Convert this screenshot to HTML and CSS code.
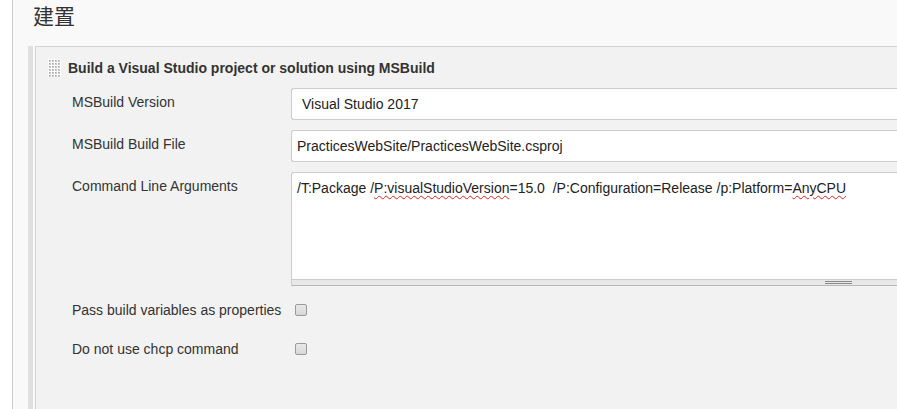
FILE: index.html
```html
<!DOCTYPE html>
<html lang="zh-Hant">
<head>
<meta charset="utf-8">
<title>建置</title>
<link rel="stylesheet" href="styles.css">
</head>
<body>
<div class="page">
  <h1 class="page-title">建置</h1>
  <div class="section">
    <div class="panel">
      <div class="panel-head">
        <svg class="grip" width="13" height="18" viewBox="0 0 13 18" aria-hidden="true">
          <defs>
            <pattern id="dots" x="1" y="1" width="3" height="3" patternUnits="userSpaceOnUse">
              <rect x="0" y="0" width="2" height="2" fill="#c8c8c8"/>
              <rect x="0" y="0" width="1" height="1" fill="#a8a8a8"/>
            </pattern>
          </defs>
          <rect width="13" height="18" fill="#fbfbfb"/>
          <rect x="1" y="1" width="12" height="17" fill="url(#dots)"/>
        </svg>
        <span class="panel-title">Build a Visual Studio project or solution using MSBuild</span>
      </div>
      <div class="form">
        <label class="field-label">MSBuild Version</label>
        <div class="field"><div class="select">Visual Studio 2017</div></div>

        <label class="field-label">MSBuild Build File</label>
        <div class="field"><div class="input">PracticesWebSite/PracticesWebSite.csproj</div></div>

        <label class="field-label">Command Line Arguments</label>
        <div class="field">
          <div class="textarea">/T:Package /<span class="spell">P:visualStudioVersion</span>=15.0&nbsp; /P:Configuration=Release /p:Platform=<span class="spell">AnyCPU</span></div>
          <div class="resizer"><span class="resizer-grip"></span></div>
        </div>

        <label class="field-label check-label">Pass build variables as properties</label>
        <div class="field check-field"><input type="checkbox" class="check"></div>

        <label class="field-label check-label">Do not use chcp command</label>
        <div class="field check-field"><input type="checkbox" class="check"></div>
      </div>
    </div>
  </div>
</div>
</body>
</html>
```

FILE: styles.css
```css
html, body {
  margin: 0;
  padding: 0;
  background: #ffffff;
  overflow: hidden;
  height: 409px;
}

body {
  font-family: "Liberation Sans", Arial, sans-serif;
  font-size: 14px;
  color: #333333;
}

.page {
  margin-left: 12px;
  border-left: 1px solid #cccccc;
  background: #f9f9f9;
  height: 409px;
  padding-left: 15px;
  width: 920px;
}

.page-title {
  margin: 0;
  height: 46px;
  padding-left: 5px;
  font-family: "Noto Sans CJK TC", "Noto Sans CJK SC", sans-serif;
  font-weight: normal;
  font-size: 21px;
  line-height: 30px;
  color: #333333;
}

.section {
  display: flex;
  border-left: 5px solid #e0e0e0;
  padding-left: 2px;
  height: 363px;
}

.panel {
  flex: 1;
  background: #f2f2f2;
  border-left: 1px solid #d4d4d4;
  border-top: 1px solid #d4d4d4;
  padding: 11px 0 0 12px;
}

.panel-head {
  display: flex;
  align-items: center;
  gap: 7px;
  height: 20px;
}

.grip {
  display: block;
  flex: none;
}

.panel-title {
  font-weight: bold;
  font-size: 14px;
  color: #333333;
  line-height: 20px;
}

.form {
  display: grid;
  grid-template-columns: 219px 1fr;
  row-gap: 10px;
  margin-top: 10px;
  margin-left: 24px;
}

.field-label {
  padding-top: 4px;
  line-height: 20px;
  color: #333333;
}

.select,
.input {
  box-sizing: border-box;
  height: 32px;
  background: #ffffff;
  border: 1px solid #cccccc;
  border-radius: 3px 0 0 3px;
  border-right: none;
  line-height: 30px;
  color: #222222;
  white-space: nowrap;
}

.select {
  padding-left: 10px;
}

.input {
  padding-left: 5px;
}

.textarea {
  box-sizing: border-box;
  height: 108px;
  background: #ffffff;
  border: 1px solid #cccccc;
  border-right: none;
  border-radius: 3px 0 0 0;
  padding: 5px 5px;
  line-height: 20px;
  color: #222222;
  white-space: nowrap;
}

.spell {
  text-decoration: underline wavy #e02020;
  text-decoration-thickness: 1px;
  text-underline-offset: 2px;
}

.resizer {
  box-sizing: border-box;
  height: 6px;
  background: #e8e8e8;
  border-left: 1px solid #cccccc;
  border-bottom: 1px solid #b8b8b8;
  display: flex;
  padding-left: 533px;
  padding-top: 1px;
}

.resizer-grip {
  width: 27px;
  height: 3px;
  border-top: 1px solid #8a8a8a;
  border-bottom: 1px solid #8a8a8a;
  box-sizing: border-box;
}

.check-label {
  height: 29px;
  box-sizing: border-box;
  padding-top: 4px;
}

.check-field {
  height: 29px;
  display: flex;
  align-items: flex-start;
  padding-top: 8px;
  box-sizing: border-box;
}

.check {
  appearance: none;
  -webkit-appearance: none;
  margin: 0 0 0 4px;
  width: 12px;
  height: 12px;
  box-sizing: border-box;
  border: 1px solid #9a9a9a;
  border-radius: 2px;
  background: linear-gradient(#e8e8e8, #d8d8d8);
}
```
